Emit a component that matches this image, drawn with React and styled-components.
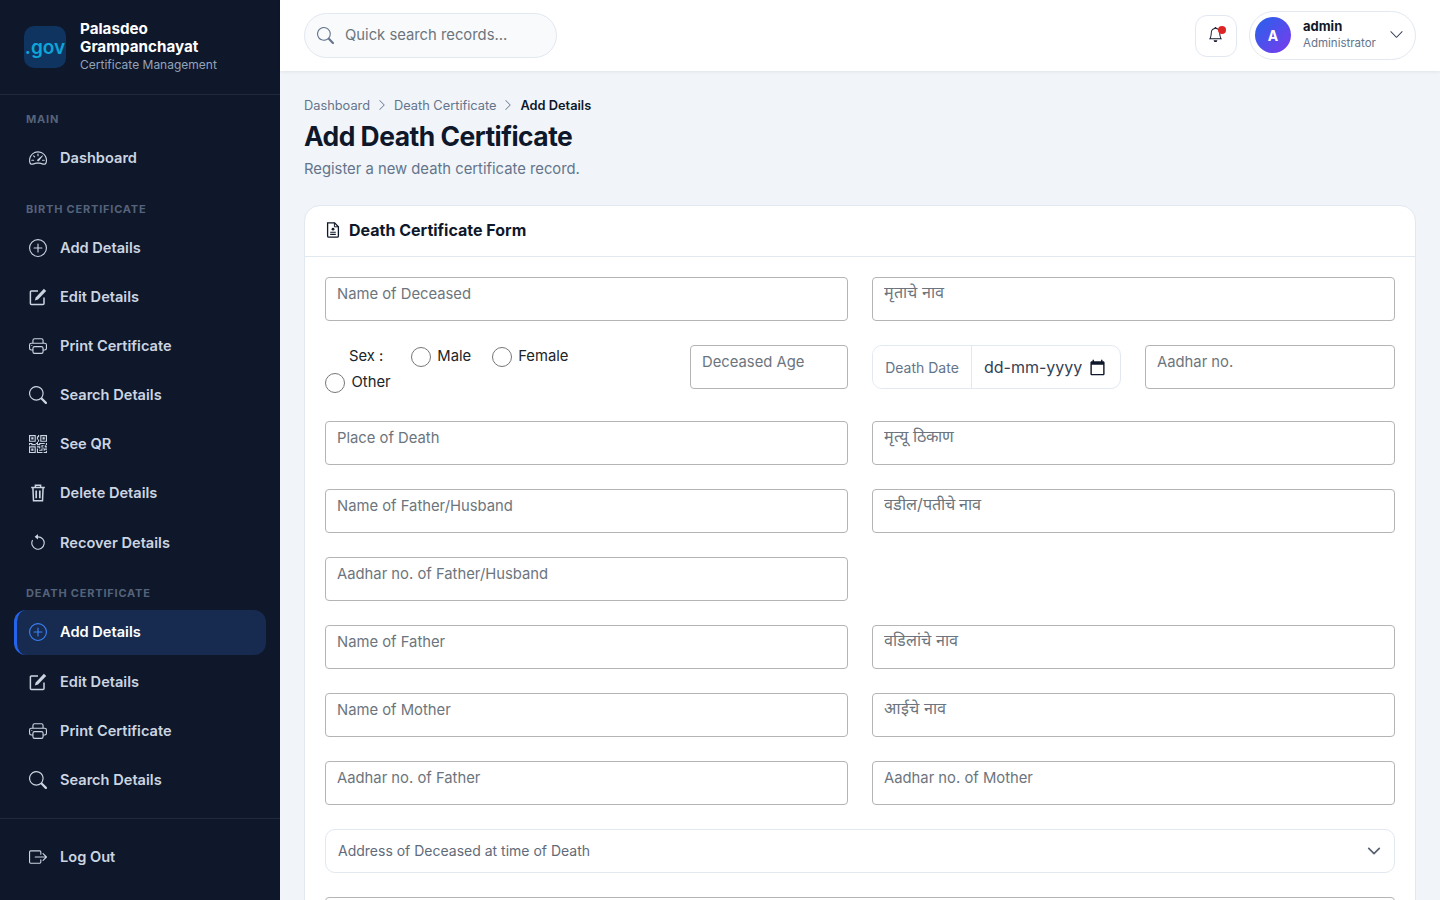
import React from "react"
import styled, { createGlobalStyle } from "styled-components"
import {
  BsSpeedometer2, BsPlusCircle, BsPrinter, BsSearch, BsQrCode,
  BsArrowCounterclockwise, BsBoxArrowRight, BsBell, BsChevronDown, BsChevronRight,
} from "react-icons/bs"

const GlobalStyle = createGlobalStyle`
  * { box-sizing: border-box; }
  html, body { margin: 0; padding: 0; height: 100%; overflow: hidden; }
  body { font-family: Inter, "Noto Sans", "Liberation Sans", sans-serif; background: #f1f5f9; }
`

const EditIcon = () => (
  <svg width="1em" height="1em" viewBox="0 0 18 18" fill="none" stroke="currentColor">
    <path d="M15 9.5V15.6a1 1 0 0 1-1 1H2.4a1 1 0 0 1-1-1V4a1 1 0 0 1 1-1H9" strokeWidth="1.5" />
    <path d="M14.9.8 17.2 3 9 11.6l-3.2 1 .9-3.2z" fill="currentColor" stroke="none" />
  </svg>
)
const TrashIcon = () => (
  <svg width="1em" height="1em" viewBox="0 0 18 18" fill="none" stroke="currentColor" strokeWidth="1.5">
    <path d="M6.4 3.2V1.3h5.2v1.9M2.2 3.6h13.6" />
    <path d="M3.9 3.8 4.5 16.7h9L14.1 3.8" />
    <path d="M7.2 6.6v7.6M10.8 6.6v7.6" strokeWidth="1.7" />
  </svg>
)
const FormDocIcon = () => (
  <svg width="16" height="16" viewBox="0 0 16 16" fill="none" stroke="currentColor" strokeWidth="1.3">
    <path d="M2.6.8h7l3.8 3.9v9.2a1.3 1.3 0 0 1-1.3 1.3H3.9a1.3 1.3 0 0 1-1.3-1.3z" />
    <path d="M9.4.8v4h4" strokeWidth="1" />
    <circle cx="8" cy="7.2" r="1.4" fill="currentColor" stroke="none" />
    <path d="M5.2 10.2h5.6M5.2 12.4h5.6" strokeWidth="1.1" />
  </svg>
)
const CalendarGlyph = () => (
  <svg width="17" height="17" viewBox="0 0 24 24" fill="currentColor">
    <path d="M20 3h-1V1h-2v2H7V1H5v2H4c-1.1 0-2 .9-2 2v16c0 1.1.9 2 2 2h16c1.1 0 2-.9 2-2V5c0-1.1-.9-2-2-2zm0 18H4V8h16v13z" />
  </svg>
)
const CaretGlyph = () => (
  <svg width="14" height="14" viewBox="0 0 16 16" fill="none" stroke="currentColor" strokeWidth="2" strokeLinecap="round" strokeLinejoin="round">
    <path d="m2 5 6 6 6-6" />
  </svg>
)

const Shell = styled.div`
  display: flex;
  height: 100vh;
  overflow: hidden;
`
const Sidebar = styled.aside`
  width: 280px;
  flex: none;
  background: #0f172a;
  display: flex;
  flex-direction: column;
`
const Brand = styled.div`
  height: 95px;
  flex: none;
  display: flex;
  align-items: center;
  gap: 14px;
  padding: 0 24px;
  border-bottom: 1px solid #1e293b;
`
const Logo = styled.div`
  width: 42px;
  height: 42px;
  flex: none;
  border-radius: 10px;
  background: #0f3460;
  color: #0ea5d9;
  font-size: 19px;
  font-weight: 600;
  display: flex;
  align-items: center;
  justify-content: center;
  overflow: hidden;
`
const BrandText = styled.div`
  display: flex;
  flex-direction: column;
`
const BrandName = styled.div`
  color: #fff;
  font-size: 15.2px;
  font-weight: 700;
  line-height: 18px;
`
const BrandSub = styled.div`
  color: #94a3b8;
  font-size: 12px;
  line-height: 18px;
`
const Nav = styled.nav`
  flex: 1;
  padding: 17px 14px 0;
  overflow: hidden;
`
const Section = styled.div`
  margin-bottom: 21.33px;
`
const SectionLabel = styled.div`
  height: 14px;
  line-height: 14px;
  margin-bottom: 9.5px;
  padding-left: 12px;
  color: #55637a;
  font-size: 11px;
  font-weight: 700;
  letter-spacing: 0.8px;
  text-transform: uppercase;
`
const NavItem = styled.a`
  height: 45.1px;
  display: flex;
  align-items: center;
  gap: 13px;
  margin-bottom: 4px;
  padding-left: 12px;
  border-left: 3px solid ${p => (p.$active ? "#2563eb" : "transparent")};
  border-radius: 12px;
  background: ${p => (p.$active ? "#172a4f" : "transparent")};
  color: ${p => (p.$active ? "#fff" : "#cbd5e1")};
  font-size: 14.6px;
  font-weight: 600;
  svg {
    font-size: 18px;
    flex: none;
    color: ${p => (p.$active ? "#3b82f6" : "#cbd5e1")};
  }
`
const SideFooter = styled.div`
  height: 82px;
  flex: none;
  padding: 15.5px 14px 0;
  border-top: 1px solid #1e293b;
`
const Main = styled.div`
  flex: 1;
  min-width: 0;
  display: flex;
  flex-direction: column;
`
const Topbar = styled.header`
  height: 71px;
  flex: none;
  background: #fff;
  box-shadow: 0 1px 3px rgba(15, 23, 42, 0.08);
  display: flex;
  align-items: center;
  justify-content: space-between;
  padding: 0 24px;
  position: relative;
`
const SearchBox = styled.div`
  width: 253px;
  height: 45px;
  display: flex;
  align-items: center;
  gap: 11px;
  padding: 0 13px 1px 12px;
  border: 1px solid #e2e8f0;
  border-radius: 23px;
  background: #f8fafc;
  color: #64748b;
  svg { font-size: 17px; flex: none; }
`
const SearchInput = styled.input`
  flex: 1;
  min-width: 0;
  padding: 0;
  border: 0;
  outline: 0;
  background: transparent;
  font: 400 14.8px Inter, sans-serif;
  &::placeholder { color: #6c757d; opacity: 1; }
`
const TopRight = styled.div`
  display: flex;
  align-items: center;
  gap: 12px;
`
const BellButton = styled.div`
  width: 42px;
  height: 42px;
  position: relative;
  display: flex;
  align-items: center;
  justify-content: center;
  padding: 0 2px 2px 0;
  border: 1px solid #e2e8f0;
  border-radius: 12px;
  background: #fff;
  color: #0f172a;
  svg { font-size: 15px; }
`
const BellDot = styled.span`
  position: absolute;
  top: 10px;
  right: 10px;
  width: 8px;
  height: 8px;
  border-radius: 50%;
  background: #dc2626;
`
const UserPill = styled.div`
  width: 167px;
  height: 49px;
  display: flex;
  align-items: center;
  padding: 0 11px 0 5px;
  border: 1px solid #e2e8f0;
  border-radius: 25px;
  svg { font-size: 15px; color: #334155; flex: none; margin-bottom: 2px; }
`
const Avatar = styled.div`
  width: 36px;
  height: 36px;
  flex: none;
  border-radius: 50%;
  background: linear-gradient(135deg, #2563eb, #7c3aed);
  color: #fff;
  font-size: 14px;
  font-weight: 700;
  display: flex;
  align-items: center;
  justify-content: center;
  margin: 0 12px 1px 0;
`
const UserText = styled.div`
  flex: 1;
  min-width: 0;
  padding-bottom: 2px;
`
const UserName = styled.div`
  color: #0f172a;
  font-size: 13px;
  font-weight: 700;
  line-height: 16px;
`
const UserRole = styled.div`
  color: #64748b;
  font-size: 11.5px;
  line-height: 18px;
`
const Content = styled.main`
  flex: 1;
  min-height: 0;
  overflow: hidden;
  padding: 26px 24px 0;
  background: #f1f5f9;
`
const Crumbs = styled.div`
  display: flex;
  align-items: center;
  gap: 6px;
  height: 16px;
  color: #64748b;
  font-size: 12.8px;
  svg { font-size: 12px; }
`
const CrumbCurrent = styled.span`
  color: #0f172a;
  font-weight: 600;
`
const PageTitle = styled.h1`
  margin: 5px 0 0;
  color: #0f172a;
  font-size: 26.4px;
  font-weight: 700;
  line-height: 36px;
  letter-spacing: -0.5px;
`
const PageSub = styled.p`
  margin: 4px 0 0;
  color: #64748b;
  font-size: 14.8px;
  line-height: 22px;
`
const Card = styled.section`
  margin-top: 25px;
  background: #fff;
  border: 1px solid #e2e8f0;
  border-radius: 16px;
`
const CardHead = styled.div`
  height: 51px;
  display: flex;
  align-items: center;
  gap: 8px;
  padding: 0 20px 2px;
  border-bottom: 1px solid #e2e8f0;
  color: #0f172a;
  font-size: 16px;
  font-weight: 700;
  svg { flex: none; }
`
const FormGrid = styled.div`
  display: grid;
  grid-template-columns: 1fr 1fr;
  gap: 24px;
  padding: 20px 20px 24px;
`
const Field = styled.input`
  display: block;
  width: 100%;
  height: 44px;
  padding: 0 11px 11px;
  border: 1px solid #b4b4b4;
  border-radius: 4px;
  background: #fff;
  outline: 0;
  font: 400 14.8px Inter, sans-serif;
  &::placeholder { color: #6c757d; opacity: 1; }
`
const MarathiField = styled(Field)`
  padding-bottom: 15px;
  font-size: 16.2px;
`
const Split = styled.div`
  display: flex;
  gap: 24px;
`
const SexBox = styled.div`
  flex: 1;
  min-width: 0;
  margin: -2px 0 2px;
  display: flex;
  flex-wrap: wrap;
  align-content: flex-start;
  align-items: center;
  color: #212529;
  font-size: 14.8px;
  line-height: 26px;
`
const SexLabel = styled.span`
  margin: 0 27.5px 0 24px;
`
const RadioLabel = styled.label`
  display: inline-flex;
  align-items: center;
  gap: 6.5px;
  margin-right: 20.5px;
`
const Radio = styled.input.attrs({ type: "radio", name: "sex" })`
  width: 20px;
  height: 20px;
  margin: 2px 0 0;
`
const FixedSlot = styled.div`
  width: ${p => p.$w}px;
  flex: none;
`
const DateGroup = styled.div`
  flex: 1;
  min-width: 0;
  height: 44px;
  display: flex;
  align-items: center;
  border: 1px solid #e2e8f0;
  border-radius: 10px;
  overflow: hidden;
  svg { color: #0f172a; flex: none; }
`
const DateLabel = styled.span`
  height: 100%;
  width: 99px;
  flex: none;
  display: flex;
  align-items: center;
  justify-content: center;
  border-right: 1px solid #e2e8f0;
  background: #fff;
  color: #64748b;
  font-size: 14px;
`
const DateInput = styled.input`
  width: 105px;
  flex: none;
  margin-left: 12px;
  padding: 0;
  border: 0;
  outline: 0;
  font: 400 16px Inter, sans-serif;
  &::placeholder { color: #334155; opacity: 1; }
`
const SelectBox = styled.div`
  grid-column: 1 / -1;
  height: 44px;
  display: flex;
  align-items: center;
  justify-content: space-between;
  padding: 0 13px 1px 12px;
  border: 1px solid #e2e8f0;
  border-radius: 10px;
  color: #5f6b7a;
  font-size: 14px;
  svg { color: #5b6472; }
`
const FullField = styled(Field)`
  grid-column: 1 / -1;
`

const birthItems = [
  [BsPlusCircle, "Add Details"],
  [EditIcon, "Edit Details"],
  [BsPrinter, "Print Certificate"],
  [BsSearch, "Search Details"],
  [BsQrCode, "See QR"],
  [TrashIcon, "Delete Details"],
  [BsArrowCounterclockwise, "Recover Details"],
]
const deathItems = [
  [BsPlusCircle, "Add Details", true],
  [EditIcon, "Edit Details"],
  [BsPrinter, "Print Certificate"],
  [BsSearch, "Search Details"],
]

function NavList({ items }) {
  return items.map(([Icon, label, active]) => (
    <NavItem key={label} $active={active}>
      <Icon />
      {label}
    </NavItem>
  ))
}

export default function App() {
  return (
    <>
      <GlobalStyle />
      <Shell>
        <Sidebar>
          <Brand>
            <Logo>.gov</Logo>
            <BrandText>
              <BrandName>Palasdeo Grampanchayat</BrandName>
              <BrandSub>Certificate Management</BrandSub>
            </BrandText>
          </Brand>
          <Nav>
            <Section>
              <SectionLabel>Main</SectionLabel>
              <NavList items={[[BsSpeedometer2, "Dashboard"]]} />
            </Section>
            <Section>
              <SectionLabel>Birth Certificate</SectionLabel>
              <NavList items={birthItems} />
            </Section>
            <Section>
              <SectionLabel>Death Certificate</SectionLabel>
              <NavList items={deathItems} />
            </Section>
          </Nav>
          <SideFooter>
            <NavList items={[[BsBoxArrowRight, "Log Out"]]} />
          </SideFooter>
        </Sidebar>
        <Main>
          <Topbar>
            <SearchBox>
              <BsSearch />
              <SearchInput placeholder="Quick search records..." />
            </SearchBox>
            <TopRight>
              <BellButton>
                <BsBell />
                <BellDot />
              </BellButton>
              <UserPill>
                <Avatar>A</Avatar>
                <UserText>
                  <UserName>admin</UserName>
                  <UserRole>Administrator</UserRole>
                </UserText>
                <BsChevronDown />
              </UserPill>
            </TopRight>
          </Topbar>
          <Content>
            <Crumbs>
              <span>Dashboard</span>
              <BsChevronRight />
              <span>Death Certificate</span>
              <BsChevronRight />
              <CrumbCurrent>Add Details</CrumbCurrent>
            </Crumbs>
            <PageTitle>Add Death Certificate</PageTitle>
            <PageSub>Register a new death certificate record.</PageSub>
            <Card>
              <CardHead>
                <FormDocIcon />
                Death Certificate Form
              </CardHead>
              <FormGrid>
                <Field placeholder="Name of Deceased" />
                <MarathiField placeholder="मृताचे नाव" />
                <Split>
                  <SexBox>
                    <SexLabel>Sex :</SexLabel>
                    <RadioLabel><Radio />Male</RadioLabel>
                    <RadioLabel><Radio />Female</RadioLabel>
                    <RadioLabel><Radio />Other</RadioLabel>
                  </SexBox>
                  <FixedSlot $w={158}>
                    <Field placeholder="Deceased Age" />
                  </FixedSlot>
                </Split>
                <Split>
                  <DateGroup>
                    <DateLabel>Death Date</DateLabel>
                    <DateInput placeholder="dd-mm-yyyy" />
                    <CalendarGlyph />
                  </DateGroup>
                  <FixedSlot $w={250}>
                    <Field placeholder="Aadhar no." />
                  </FixedSlot>
                </Split>
                <Field placeholder="Place of Death" />
                <MarathiField placeholder="मृत्यू ठिकाण" />
                <Field placeholder="Name of Father/Husband" />
                <MarathiField placeholder="वडील/पतीचे नाव" />
                <Field placeholder="Aadhar no. of Father/Husband" />
                <div />
                <Field placeholder="Name of Father" />
                <MarathiField placeholder="वडिलांचे नाव" />
                <Field placeholder="Name of Mother" />
                <MarathiField placeholder="आईचे नाव" />
                <Field placeholder="Aadhar no. of Father" />
                <Field placeholder="Aadhar no. of Mother" />
                <SelectBox>
                  Address of Deceased at time of Death
                  <CaretGlyph />
                </SelectBox>
                <FullField />
              </FormGrid>
            </Card>
          </Content>
        </Main>
      </Shell>
    </>
  )
}
